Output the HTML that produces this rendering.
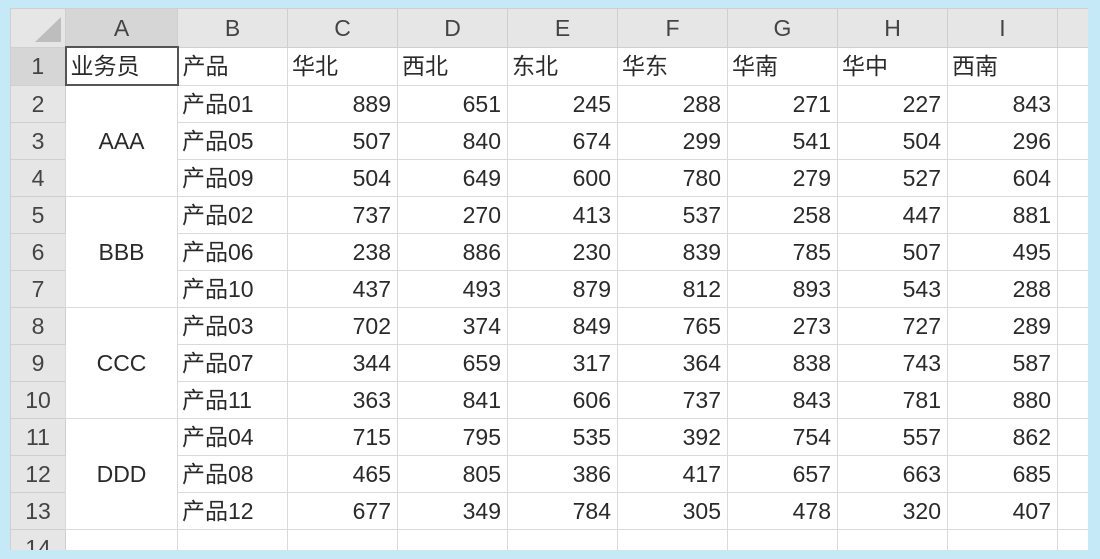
<!DOCTYPE html>
<html><head><meta charset="utf-8"><style>
html,body{margin:0;padding:0;}
body{width:1100px;height:559px;background:#c6e9f7;position:relative;overflow:hidden;font-family:"Liberation Sans","Noto Sans CJK SC",sans-serif;}
.wrap{position:absolute;left:10px;top:8px;width:1078px;height:542px;background:#fff;overflow:hidden;}
table{border-collapse:collapse;table-layout:fixed;position:absolute;left:0;top:0;width:1078px;}
td{border:1px solid #dadada;height:36px;padding:0 6px;font-size:23px;color:#2a2a2a;white-space:nowrap;overflow:hidden;text-align:right;line-height:36px;}
tr.h td{background:#e6e6e6;height:37px;text-align:center;color:#444;border-color:#cfcfcf;}
td.rh{background:#e6e6e6;text-align:center;color:#444;border-color:#cfcfcf;padding:0 4px;}
td.l{text-align:left;padding-left:4px;padding-right:8px;}
td.c{text-align:center;}
</style></head><body><div class="wrap">
<table>
<colgroup><col style="width:55px"><col style="width:112px"><col style="width:110px"><col style="width:110px"><col style="width:110px"><col style="width:110px"><col style="width:110px"><col style="width:110px"><col style="width:110px"><col style="width:110px"><col style="width:31px"></colgroup>
<tr class="h"><td style="background:#e6e6e6;padding:0"><svg width="55" height="37" style="display:block"><polygon points="50,8 50,33 24,33" fill="#bdbdbd"/></svg></td><td style="background:#d6d6d6">A</td><td>B</td><td>C</td><td>D</td><td>E</td><td>F</td><td>G</td><td>H</td><td>I</td><td></td></tr>
<tr><td class="rh" style="background:#d6d6d6">1</td><td class="l" style="border:2px solid #555">业务员</td><td class="l">产品</td><td class="l">华北</td><td class="l">西北</td><td class="l">东北</td><td class="l">华东</td><td class="l">华南</td><td class="l">华中</td><td class="l">西南</td><td></td></tr>
<tr><td class="rh">2</td><td class="c" rowspan="3">AAA</td><td class="l">产品01</td><td>889</td><td>651</td><td>245</td><td>288</td><td>271</td><td>227</td><td>843</td><td></td></tr>
<tr><td class="rh">3</td><td class="l">产品05</td><td>507</td><td>840</td><td>674</td><td>299</td><td>541</td><td>504</td><td>296</td><td></td></tr>
<tr><td class="rh">4</td><td class="l">产品09</td><td>504</td><td>649</td><td>600</td><td>780</td><td>279</td><td>527</td><td>604</td><td></td></tr>
<tr><td class="rh">5</td><td class="c" rowspan="3">BBB</td><td class="l">产品02</td><td>737</td><td>270</td><td>413</td><td>537</td><td>258</td><td>447</td><td>881</td><td></td></tr>
<tr><td class="rh">6</td><td class="l">产品06</td><td>238</td><td>886</td><td>230</td><td>839</td><td>785</td><td>507</td><td>495</td><td></td></tr>
<tr><td class="rh">7</td><td class="l">产品10</td><td>437</td><td>493</td><td>879</td><td>812</td><td>893</td><td>543</td><td>288</td><td></td></tr>
<tr><td class="rh">8</td><td class="c" rowspan="3">CCC</td><td class="l">产品03</td><td>702</td><td>374</td><td>849</td><td>765</td><td>273</td><td>727</td><td>289</td><td></td></tr>
<tr><td class="rh">9</td><td class="l">产品07</td><td>344</td><td>659</td><td>317</td><td>364</td><td>838</td><td>743</td><td>587</td><td></td></tr>
<tr><td class="rh">10</td><td class="l">产品11</td><td>363</td><td>841</td><td>606</td><td>737</td><td>843</td><td>781</td><td>880</td><td></td></tr>
<tr><td class="rh">11</td><td class="c" rowspan="3">DDD</td><td class="l">产品04</td><td>715</td><td>795</td><td>535</td><td>392</td><td>754</td><td>557</td><td>862</td><td></td></tr>
<tr><td class="rh">12</td><td class="l">产品08</td><td>465</td><td>805</td><td>386</td><td>417</td><td>657</td><td>663</td><td>685</td><td></td></tr>
<tr><td class="rh">13</td><td class="l">产品12</td><td>677</td><td>349</td><td>784</td><td>305</td><td>478</td><td>320</td><td>407</td><td></td></tr>
<tr><td class="rh">14</td><td></td><td></td><td></td><td></td><td></td><td></td><td></td><td></td><td></td><td></td></tr>
</table></div></body></html>
